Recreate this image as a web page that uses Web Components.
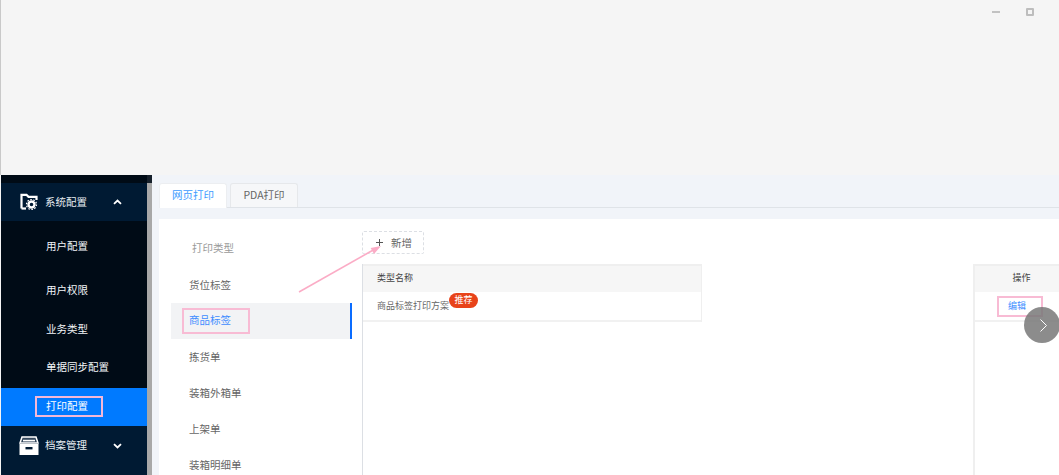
<!DOCTYPE html>
<html lang="zh-CN">
<head>
<meta charset="utf-8">
<title>打印配置</title>
<style>
  html, body { margin: 0; height: 100%; overflow: hidden; background: #f5f5f5; }
  body { font-family: "Noto Sans CJK SC", "Noto Sans", sans-serif; }
</style>
</head>
<body>
<app-shell>
  <window-bar slot="bar"></window-bar>
  <side-nav slot="nav">
    <nav-group label="系统配置" icon="folder" open></nav-group>
    <nav-item h="49">用户配置</nav-item>
    <nav-item h="39">用户权限</nav-item>
    <nav-item h="39">业务类型</nav-item>
    <nav-item h="40" style="padding-bottom:3px">单据同步配置</nav-item>
    <nav-item h="38" active>打印配置</nav-item>
    <nav-group label="档案管理" icon="box"></nav-group>
  </side-nav>
  <print-tabs slot="tabs"></print-tabs>
  <type-list slot="types">
    <type-item>货位标签</type-item>
    <type-item active>商品标签</type-item>
    <type-item>拣货单</type-item>
    <type-item>装箱外箱单</type-item>
    <type-item>上架单</type-item>
    <type-item>装箱明细单</type-item>
  </type-list>
  <scheme-table slot="table"></scheme-table>
</app-shell>

<script>
class AppShell extends HTMLElement {
	constructor() {
		super();
		this.attachShadow({ mode: "open" });
		this.shadowRoot.innerHTML = `
      <style>
        :host {
          display: flex;
          flex-direction: column;
          position: relative;
          width: 1059px;
          height: 475px;
          overflow: hidden;
          background: #f5f5f5;
        }
        .work { display: flex; height: 300px; }
        .scroll { width: 5px; flex: none; background: #a8a8a8; margin-top: 8px; height: 292px; }
        .scroll-wrap { width: 5px; flex: none; background: #16202b; }
        .main { flex: 1; min-width: 0; background: #f1f4f9; padding: 8px 0 0 7px; }
        .panel {
          display: flex;
          background: #fff;
          margin-top: 11px;
          height: 256px;
          padding-left: 12px;
        }
        .arrow { position: absolute; left: 295px; top: 240px; pointer-events: none; }
        .next {
          position: absolute;
          left: 1024px;
          top: 307px;
          width: 36px;
          height: 36px;
          border-radius: 50%;
          background: rgba(120, 120, 120, 0.85);
          display: flex;
          align-items: center;
          justify-content: center;
        }
        .next svg { margin-left: 2px; }
      </style>
      <slot name="bar"></slot>
      <div class="work">
        <slot name="nav"></slot>
        <div class="scroll-wrap"><div class="scroll"></div></div>
        <div class="main">
          <slot name="tabs"></slot>
          <div class="panel">
            <slot name="types"></slot>
            <slot name="table"></slot>
          </div>
        </div>
      </div>
      <svg class="arrow" width="92" height="56" viewBox="0 0 92 56" fill="none" aria-hidden="true">
        <path d="M4 52 L80 9" stroke="#fbacc6" stroke-width="1.6"/>
        <path d="M86 6 L75.6 7.9 L79 14 Z" fill="#fbacc6"/>
      </svg>
      <div class="next">
        <svg width="9" height="15" viewBox="0 0 9 15" fill="none" aria-hidden="true">
          <path d="M1.5 1.5 L7.5 7.5 L1.5 13.5" stroke="#fff" stroke-width="1"/>
        </svg>
      </div>
    `;
	}
}

class WindowBar extends HTMLElement {
	constructor() {
		super();
		this.attachShadow({ mode: "open" });
		this.shadowRoot.innerHTML = `
      <style>
        :host {
          display: flex;
          box-sizing: border-box;
          height: 175px;
          flex: none;
          justify-content: flex-end;
          gap: 26px;
          padding: 8px 25px 0 0;
          background: #f5f5f5;
          border-left: 1px solid #c9c9c9;
        }
        .min { width: 8px; height: 2px; margin-top: 3px; background: #c2c2c2; }
        .max { box-sizing: border-box; width: 8px; height: 8px; border: 2px solid #bdbdbd; border-radius: 1px; }
      </style>
      <div class="min"></div>
      <div class="max"></div>
    `;
	}
}

class SideNav extends HTMLElement {
	constructor() {
		super();
		this.attachShadow({ mode: "open" });
		this.shadowRoot.innerHTML = `
      <style>
        :host {
          display: block;
          box-sizing: border-box;
          width: 146px;
          flex: none;
          height: 300px;
          padding-top: 8px;
          margin-left: 1px;
          background: #000b16;
          color: #fff;
          font-size: 10.5px;
        }
      </style>
      <slot></slot>
    `;
	}
}

const NAV_ICONS = {
	folder: `<svg width="18" height="18" viewBox="0 0 18 18" fill="none" aria-hidden="true">
      <path d="M1.5 15.5 V1.8 H6.5 L8.5 3.8 H16.5 V7" stroke="#fff" stroke-width="2.2"/>
      <path d="M1.5 15.5 H6" stroke="#fff" stroke-width="2.2"/>
      <circle cx="11.5" cy="11.5" r="3" stroke="#fff" stroke-width="2.4"/>
      <circle cx="11.5" cy="11.5" r="5" stroke="#fff" stroke-width="1.2" stroke-dasharray="1.6 1.5"/>
    </svg>`,
	box: `<svg width="20" height="20" viewBox="0 0 20 20" fill="none" aria-hidden="true">
      <path d="M3 1 H17 L19 7 H1 Z" fill="#33475c" stroke="#fff" stroke-width="1.5"/>
      <rect x="4" y="3.8" width="12" height="1.6" fill="#fff"/>
      <path d="M0.5 8 H19.5 V19 H0.5 Z" fill="#fff"/>
      <rect x="6.5" y="11" width="7" height="2.4" fill="#001a33"/>
    </svg>`,
};

class NavGroup extends HTMLElement {
	connectedCallback() {
		const open = this.hasAttribute("open");
		this.attachShadow({ mode: "open" });
		this.shadowRoot.innerHTML = `
      <style>
        :host {
          display: flex;
          align-items: center;
          height: 38px;
          background: #001a33;
          padding-left: 18px;
        }
        .icon { width: 20px; display: flex; justify-content: center; }
        .label { margin-left: 6px; margin-bottom: 2px; width: 68px; color: #e8edf2; }
        svg.caret { display: block; }
        :host(:not([open])) { height: 49px; padding-bottom: 10px; box-sizing: border-box; }
      </style>
      <span class="icon">${NAV_ICONS[this.getAttribute("icon")]}</span>
      <span class="label">${this.getAttribute("label")}</span>
      <svg class="caret" width="9" height="6" viewBox="0 0 9 6" fill="none" aria-hidden="true">
        <path d="${open ? "M1 4.8 L4.5 1.5 L8 4.8" : "M1 1.2 L4.5 4.5 L8 1.2"}" stroke="#fff" stroke-width="1.8"/>
      </svg>
    `;
	}
}

class NavItem extends HTMLElement {
	connectedCallback() {
		this.attachShadow({ mode: "open" });
		this.shadowRoot.innerHTML = `
      <style>
        :host {
          display: flex;
          align-items: center;
          box-sizing: border-box;
          height: ${this.getAttribute("h")}px;
          padding-left: 45px;
          color: #f2f5f8;
        }
        :host([active]) { background: #007aff; padding-left: 34px; padding-bottom: 1px; color: #fff; }
        :host([active]) .text {
          display: block;
          padding: 1px 13px 3px 9px;
          line-height: 13px;
          border: 2px solid #f3b8d8;
        }
      </style>
      <span class="text"><slot></slot></span>
    `;
	}
}

class PrintTabs extends HTMLElement {
	constructor() {
		super();
		this.attachShadow({ mode: "open" });
		this.shadowRoot.innerHTML = `
      <style>
        :host {
          display: flex;
          gap: 3px;
          height: 24px;
          border-bottom: 1px solid #dfe3e8;
          font-size: 10.5px;
        }
        .tab {
          box-sizing: border-box;
          width: 68px;
          height: 24px;
          padding-bottom: 3px;
          display: flex;
          align-items: center;
          justify-content: center;
          border: 1px solid #e6e8eb;
          border-bottom: 0;
          border-radius: 3px 3px 0 0;
          background: #f6f7f9;
          color: #666;
        }
        .tab.active { background: #fff; color: #3d9bff; height: 25px; padding-bottom: 4px; border-color: #eceef1; }
      </style>
      <div class="tab active">网页打印</div>
      <div class="tab">PDA打印</div>
    `;
	}
}

class TypeList extends HTMLElement {
	constructor() {
		super();
		this.attachShadow({ mode: "open" });
		this.shadowRoot.innerHTML = `
      <style>
        :host {
          display: block;
          box-sizing: border-box;
          width: 191px;
          flex: none;
          height: 256px;
          font-size: 10.5px;
          color: #666;
          overflow: hidden;
        }
        .title {
          box-sizing: border-box;
          height: 48px;
          padding: 11px 0 0 21px;
          line-height: 36px;
          color: #9a9a9a;
        }
        .list { width: 181px; }
      </style>
      <div class="title">打印类型</div>
      <div class="list"><slot></slot></div>
    `;
	}
}

class TypeItem extends HTMLElement {
	constructor() {
		super();
		this.attachShadow({ mode: "open" });
		this.shadowRoot.innerHTML = `
      <style>
        :host {
          display: flex;
          align-items: center;
          box-sizing: border-box;
          height: 36px;
          padding: 0 0 2px 18px;
        }
        :host([active]) {
          background: #f2f3f5;
          border-right: 2px solid #0a6cff;
          color: #3f8cff;
          padding: 0 0 0 11px;
        }
        :host([active]) .text {
          display: block;
          padding: 2px 6px 4px 5px;
          width: 53px;
          line-height: 16px;
          border: 2px solid #f8bbd4;
        }
      </style>
      <span class="text"><slot></slot></span>
    `;
	}
}

class SchemeTable extends HTMLElement {
	constructor() {
		super();
		this.attachShadow({ mode: "open" });
		this.shadowRoot.innerHTML = `
      <style>
        :host {
          display: block;
          flex: 1;
          min-width: 0;
          font-size: 9px;
          color: #666;
        }
        .add {
          box-sizing: border-box;
          display: flex;
          align-items: center;
          width: 62px;
          height: 23px;
          margin: 12px 0 10px;
          padding-left: 12px;
          border: 1px dashed #dcdfe4;
          border-radius: 2px;
          font-size: 10.5px;
        }
        .add svg { margin-right: 7px; }
        .cols {
          display: flex;
          justify-content: space-between;
          height: 211px;
          border-left: 1px solid #dcdfe4;
        }
        .col { box-sizing: border-box; border-top: 2px solid #efefef; }
        .name { width: 339px; height: 58px; border-right: 1px solid #efefef; }
        .ops { width: 95px; margin-right: -9px; border-left: 2px solid #efefef; }
        .head {
          box-sizing: border-box;
          height: 26px;
          padding-bottom: 3px;
          display: flex;
          align-items: center;
          background: #f6f6f6;
          color: #444;
        }
        .name .head, .name .row { padding-left: 14px; }
        .ops .head { justify-content: center; }
        .row {
          box-sizing: border-box;
          display: flex;
          align-items: center;
          height: 30px;
          padding-bottom: 1px;
          border-bottom: 2px solid #f1f1f1;
          position: relative;
        }
        .ops .row { padding-left: 22px; padding-bottom: 0; }
        .badge {
          position: absolute;
          left: 86px;
          top: 1px;
          width: 29px;
          height: 15px;
          line-height: 14px;
          border-radius: 8px;
          text-align: center;
          background: #e8431a;
          color: #fff;
          font-size: 9px;
        }
        .edit {
          box-sizing: border-box;
          width: 46px;
          height: 21px;
          line-height: 16px;
          padding-left: 9px;
          margin-top: 1px;
          border: 2px solid #f8bbd4;
          color: #3d8eff;
        }
      </style>
      <div class="add">
        <svg width="9" height="9" viewBox="0 0 9 9" aria-hidden="true"><path d="M4.5 1 V8 M1 4.5 H8" stroke="#555" stroke-width="1" fill="none"/></svg>
        新增
      </div>
      <div class="cols">
        <div class="col name">
          <div class="head">类型名称</div>
          <div class="row">商品标签打印方案<span class="badge">推荐</span></div>
        </div>
        <div class="col ops">
          <div class="head">操作</div>
          <div class="row"><span class="edit">编辑</span></div>
        </div>
      </div>
    `;
	}
}

customElements.define("app-shell", AppShell);
customElements.define("window-bar", WindowBar);
customElements.define("side-nav", SideNav);
customElements.define("nav-group", NavGroup);
customElements.define("nav-item", NavItem);
customElements.define("print-tabs", PrintTabs);
customElements.define("type-list", TypeList);
customElements.define("type-item", TypeItem);
customElements.define("scheme-table", SchemeTable);
</script>
</body>
</html>
